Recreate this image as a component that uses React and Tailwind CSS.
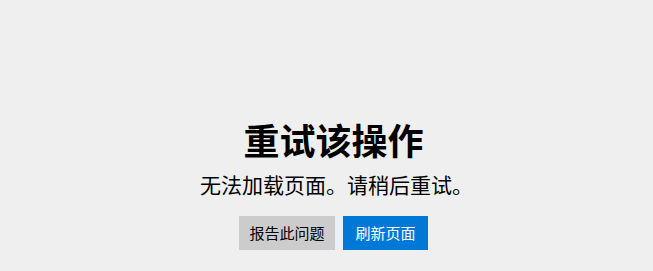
export default function App() {
  return (
    <div
      className="w-[653px] h-[271px] bg-[#efefef] flex flex-col items-center pt-[119px] pl-[14px] text-black"
      style={{ fontFamily: '"Microsoft YaHei", "Noto Sans CJK SC", sans-serif' }}
    >
      <h1 className="text-[36px] leading-[40px] font-bold">重试该操作</h1>
      <p className="text-[21px] leading-[28px] mt-[11px] pl-[6px]">无法加载页面。请稍后重试。</p>
      <div className="flex gap-2 mt-[18px]">
        <button className="w-[96px] h-[34px] bg-[#cccccc] text-[15px] text-black">
          报告此问题
        </button>
        <button className="w-[85px] h-[34px] bg-[#0078d7] text-[15px] text-white">
          刷新页面
        </button>
      </div>
    </div>
  );
}
